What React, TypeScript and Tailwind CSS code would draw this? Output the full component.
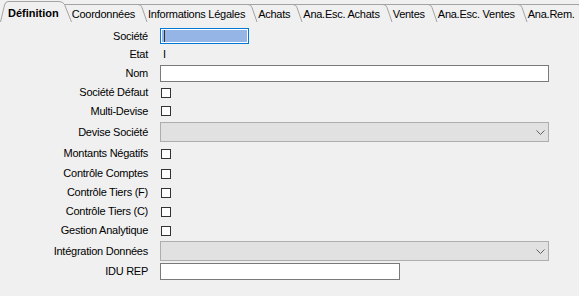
import React from 'react';

const otherTabs = ['Coordonnées', 'Informations Légales', 'Achats', 'Ana.Esc. Achats', 'Ventes', 'Ana.Esc. Ventes', 'Ana.Rem.'];

function TabSeparator() {
  return (
    <svg width="13" height="18" className="shrink-0">
      <path d="M0 0.5 H3 Q6 0.5 7 3.5 L12 18" fill="none" stroke="#a3a3a3" />
      <path d="M3 0.5 H13" fill="none" stroke="#a3a3a3" />
    </svg>
  );
}

function Checkbox() {
  return <div className="ml-px h-[10px] w-[10px] border border-[#333333] bg-white" />;
}

function Combo() {
  return (
    <div className="flex h-[20px] w-[389px] items-center justify-end border border-[#adadad] bg-[#e1e1e1] pr-[3px]">
      <svg width="9" height="5">
        <polyline points="0.5,0.5 4.5,4.5 8.5,0.5" fill="none" stroke="#606060" />
      </svg>
    </div>
  );
}

function Row({ label, h, children }: { label: string; h: string; children?: React.ReactNode }) {
  return (
    <div className={`flex items-center ${h}`}>
      <div className="w-[148px] shrink-0 text-right">{label}</div>
      <div className="ml-[12px] flex items-center">{children}</div>
    </div>
  );
}

export default function App() {
  return (
    <div
      className="h-[296px] w-[579px] overflow-hidden bg-[#f0f0f0] text-[11px] leading-[13px] tracking-[-0.25px] text-black"
      style={{ fontFamily: '"Liberation Sans", Arial, sans-serif' }}
    >
      {/* Onglets */}
      <div className="flex h-[22px] items-end overflow-hidden">
        <div className="relative z-10 flex h-[21px] shrink-0">
          <svg width="8" height="21" className="shrink-0">
            <path d="M0.5 21 L4.5 4 Q5.5 0.5 8 0.5 L8 21 Z" fill="#f0f0f0" />
            <path d="M0.5 21 L4.5 4 Q5.5 0.5 8 0.5" fill="none" stroke="#a3a3a3" />
          </svg>
          <div className="flex h-full items-center border-t border-[#a3a3a3] pt-[2px] font-bold tracking-normal">
            Définition
          </div>
          <svg width="13" height="21" className="shrink-0">
            <path d="M0 0.5 Q4 0.5 5.5 3.5 L12.5 21 L0 21 Z" fill="#f0f0f0" />
            <path d="M0 0.5 Q4 0.5 5.5 3.5 L12.5 21" fill="none" stroke="#a3a3a3" />
          </svg>
        </div>
        <div className="-ml-[8px] flex h-[18px] shrink-0 pl-[8px]">
          <div className="-ml-[8px] h-full w-[8px] border-t border-[#a3a3a3]" />
          {otherTabs.map((t) => (
            <React.Fragment key={t}>
              <div className="flex h-full items-center whitespace-nowrap border-t border-[#a3a3a3] pt-px">{t}</div>
              <TabSeparator />
            </React.Fragment>
          ))}
        </div>
      </div>

      {/* Formulaire */}
      <div className="pt-[4px]">
        <Row label="Société" h="h-[20px]">
          <div className="h-[16px] w-[89px] border border-[#0078d7] bg-white p-px">
            <div className="flex h-full items-center bg-[#94b5e5] pl-[2px]">
              <div className="h-[12px] w-px bg-[#333333]" />
            </div>
          </div>
        </Row>
        <Row label="Etat" h="h-[17px]">
          <span className="pl-[3px]">I</span>
        </Row>
        <Row label="Nom" h="h-[21px]">
          <div className="h-[17px] w-[389px] border border-[#7a7a7a] bg-white" />
        </Row>
        <Row label="Société Défaut" h="h-[17px]">
          <Checkbox />
        </Row>
        <Row label="Multi-Devise" h="h-[20px]">
          <Checkbox />
        </Row>
        <Row label="Devise Société" h="h-[22px]">
          <Combo />
        </Row>
        <Row label="Montants Négatifs" h="h-[21px]">
          <Checkbox />
        </Row>
        <Row label="Contrôle Comptes" h="h-[19px]">
          <Checkbox />
        </Row>
        <Row label="Contrôle Tiers (F)" h="h-[19px]">
          <Checkbox />
        </Row>
        <Row label="Contrôle Tiers (C)" h="h-[19px]">
          <Checkbox />
        </Row>
        <Row label="Gestion Analytique" h="h-[19px]">
          <Checkbox />
        </Row>
        <Row label="Intégration Données" h="h-[22px]">
          <Combo />
        </Row>
        <Row label="IDU REP" h="h-[19px]">
          <div className="h-[17px] w-[240px] border border-[#7a7a7a] bg-white" />
        </Row>
      </div>
    </div>
  );
}
